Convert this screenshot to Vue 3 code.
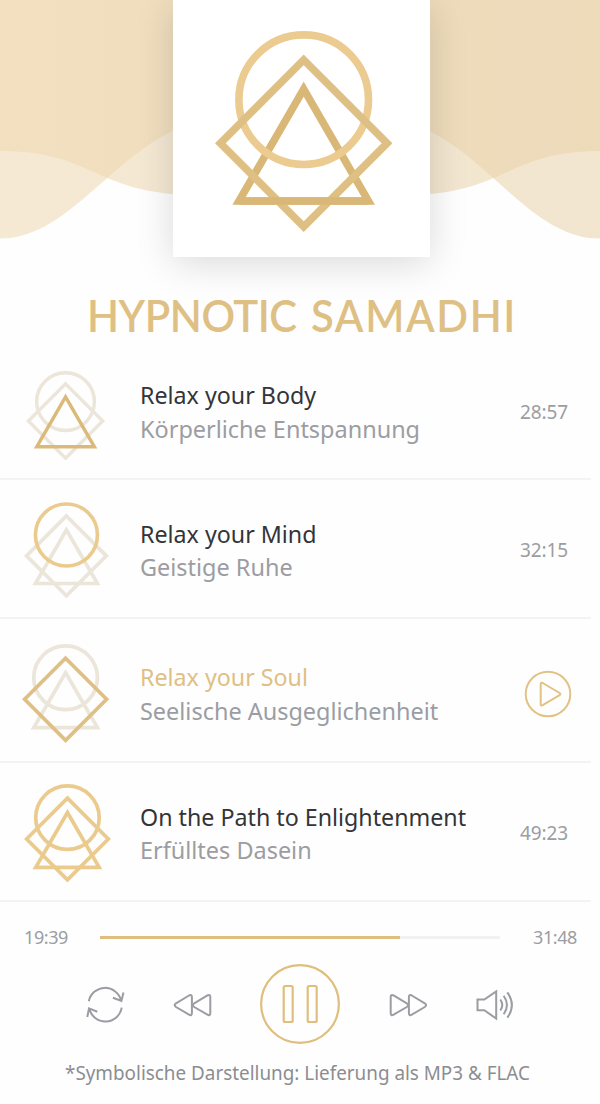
<template>
    <div class="player">
        <header class="hero">
            <svg class="waves" viewBox="0 0 600 240" preserveAspectRatio="none">
                <defs>
                    <linearGradient id="sand" x1="0" y1="0" x2="1" y2="0">
                        <stop offset="0" stop-color="#efd8b1" />
                        <stop offset="1" stop-color="#e8d1a8" />
                    </linearGradient>
                </defs>
                <path class="wave" d="M0 0V151C86 151 94 187 172 194H430C508 187 514 151 600 151V0Z" />
                <path class="wave" d="M0 0V238.500C64 238.500 104 166 172 131H430C496 166 536 238.500 600 238.500V0Z" />
            </svg>
            <div class="cover">
                <svg class="cover-logo" viewBox="215 31 177.600 201.200">
                    <path class="stroke triangle" d="M303.700 89.100L368.400 201H239Z" />
                    <circle class="stroke circle" cx="303.700" cy="99.700" r="64.800" />
                    <path class="stroke diamond" d="M303.700 59.900L387.100 143.300L303.700 226.700L220.300 143.300Z" />
                    <path class="stroke triangle" d="M239 201H368.400" />
                </svg>
            </div>
        </header>

        <h1 class="album">
            <span class="word">HYPNOTIC</span>
            <span class="word wide">SAMADHI</span>
        </h1>

        <ul class="tracks">
            <li v-for="track in tracks" :key="track.title" class="track" :class="[track.symbol, { active: track.playing }]">
                <div class="symbol">
                    <svg viewBox="215 31 177.600 201.200">
                        <circle v-if="track.symbol !== 'mind'" class="stroke circle" cx="303.700" cy="99.700" r="64.800" />
                        <path v-if="track.symbol !== 'soul'" class="stroke diamond" d="M303.700 59.900L387.100 143.300L303.700 226.700L220.300 143.300Z" />
                        <path class="stroke triangle" d="M303.700 89.100L368.400 201H239Z" />
                        <!-- the highlighted shape always goes on top -->
                        <circle v-if="track.symbol === 'mind'" class="stroke circle" cx="303.700" cy="99.700" r="64.800" />
                        <path v-if="track.symbol === 'soul'" class="stroke diamond" d="M303.700 59.900L387.100 143.300L303.700 226.700L220.300 143.300Z" />
                    </svg>
                </div>
                <div class="info">
                    <p class="title"><span>{{ track.title }}</span></p>
                    <p class="subtitle"><span>{{ track.subtitle }}</span></p>
                </div>
                <svg v-if="track.playing" class="play" viewBox="0 0 48 48">
                    <circle cx="24" cy="24" r="22.300" />
                    <path d="M16.700 14.200V34Q16.700 36.300 18.700 35.200L35.600 25.200Q37.400 24.100 35.600 23L18.700 13Q16.700 11.900 16.700 14.200Z" />
                </svg>
                <span v-else class="time">{{ track.time }}</span>
            </li>
        </ul>

        <div class="progress">
            <span class="clock">19:39</span>
            <div class="bar">
                <div class="bar-fill" :style="{ width: progress + '%' }"></div>
            </div>
            <span class="clock right">31:48</span>
        </div>

        <div class="controls">
            <svg class="icon" width="40" height="40" viewBox="0 0 40 40">
                <path d="M3.800 16.300A16.500 16.500 0 0 1 36 15.300M27.900 12.800L36.400 15.900L38.500 7.500" />
                <path d="M36.700 22.700A16.500 16.500 0 0 1 4.300 23.500M2.300 32L4 23.300L12.300 26.700" />
            </svg>
            <svg class="icon rewind" width="40" height="40" viewBox="0 0 40 40">
                <path d="M19.900 12V28Q19.900 31.200 17 29.600L4 22Q1.300 20 4 18.300L17 10.500Q19.900 9 19.900 12Z" />
                <path d="M38.300 12V28Q38.300 31.200 35.400 29.600L22.200 22Q19.500 20 22.200 18.300L35.400 10.500Q38.300 9 38.300 12Z" />
            </svg>
            <svg class="pause" width="80" height="80" viewBox="0 0 80 80">
                <circle cx="40" cy="40" r="38.900" />
                <rect x="23.700" y="22" width="9" height="36" rx="1.500" />
                <rect x="47.700" y="22" width="9" height="36" rx="1.500" />
            </svg>
            <svg class="icon" width="40" height="40" viewBox="0 0 40 40">
                <path d="M2.700 12V28Q2.700 31.200 5.600 29.600L18.800 22Q21.500 20 18.800 18.300L5.600 10.500Q2.700 9 2.700 12Z" />
                <path d="M20.900 12V28Q20.900 31.200 23.800 29.600L36.800 22Q39.500 20 36.800 18.300L23.800 10.500Q20.900 9 20.900 12Z" />
            </svg>
            <svg class="icon" width="40" height="40" viewBox="0 0 40 40">
                <path d="M2.500 14.500H9.300L21.200 6.400V33.600L9.300 25.300H2.500Z" />
                <path d="M25.300 14.500Q29.300 20 25.300 25.500M28.700 10.700Q35.200 20 28.700 29.300M32.300 7.300Q41.500 20 32.300 32.700" />
            </svg>
        </div>

        <p class="note"><span>*Symbolische Darstellung: Lieferung als MP3 &amp; FLAC</span></p>
    </div>
</template>

<script setup>
import { ref } from 'vue';

const tracks = ref([
    { title: 'Relax your Body', subtitle: 'Körperliche Entspannung', time: '28:57', symbol: 'body' },
    { title: 'Relax your Mind', subtitle: 'Geistige Ruhe', time: '32:15', symbol: 'mind' },
    { title: 'Relax your Soul', subtitle: 'Seelische Ausgeglichenheit', symbol: 'soul', playing: true },
    { title: 'On the Path to Enlightenment', subtitle: 'Erfülltes Dasein', time: '49:23', symbol: 'path' },
]);

const progress = ref(75);
</script>

<style>
body {
    margin: 0;
    background: #fefefe;
}
</style>

<style scoped>
.player {
    width: 600px;
    height: 1104px;
    overflow: hidden;
    background: #fefefe;
    font-family: "Noto Sans", sans-serif;
    color: #9b9da2;
}

/* Header with waves and cover */
.hero {
    display: grid;
    height: 288px;
}

.waves,
.cover {
    grid-area: 1 / 1;
}

.waves {
    width: 600px;
    height: 240px;
}

.wave {
    fill: url(#sand);
    fill-opacity: 0.55;
}

.cover {
    display: flex;
    justify-content: center;
    width: 257px;
    height: 257px;
    margin-left: 172.500px;
    background: #fff;
    box-shadow: 0 6px 36px rgba(0, 0, 0, 0.15);
    z-index: 1;
}

.cover-logo {
    width: 177.600px;
    height: 201.200px;
    margin: 31px 0 0 5px;
}

.stroke {
    fill: none;
    stroke-width: 7.600;
}

.circle {
    stroke: #ebcb90;
}

.diamond {
    stroke: #dfc084;
}

.triangle {
    stroke: #d9b777;
}

.album {
    display: flex;
    height: 55px;
    margin: 0;
    padding-left: 86.500px;
    font-family: Lato, sans-serif;
    font-size: 44px;
    font-weight: 600;
    line-height: 54px;
    color: #dfc084;
    white-space: nowrap;
}

.word {
    width: 224px;
    letter-spacing: -0.500px;
    transform-origin: left;
    transform: scaleX(0.95);
}

.word.wide {
    letter-spacing: 1.700px;
}

.title span,
.subtitle span,
.note span {
    display: inline-block;
    transform-origin: left;
    transform: scaleX(0.956);
}

.subtitle span {
    transform: scaleX(0.965);
}

.note span {
    transform: scaleX(0.93);
}

/* Track list */
.tracks {
    margin: 0;
    padding: 0;
    list-style: none;
}

.track {
    display: flex;
    align-items: center;
    box-sizing: border-box;
    width: 591px;
    height: 139px;
    padding-top: 3px;
    border-bottom: 2px solid #f3f3f3;
}

.track.body {
    height: 137px;
    padding-top: 2px;
}

.track.soul {
    height: 144px;
    padding-top: 7px;
}

.symbol {
    display: flex;
    justify-content: center;
    width: 132px;
    flex: none;
}

.symbol svg {
    width: 85px;
    height: 96.500px;
}

.body .symbol svg {
    width: 79.200px;
    height: 89.700px;
    margin-top: 8px;
}

.path .symbol svg {
    width: 87px;
    height: 98.600px;
    margin-left: 3px;
}

.soul .symbol svg {
    width: 87.300px;
    height: 99px;
}

.symbol .stroke {
    stroke: #ebe5da;
}

.path .symbol .stroke,
.mind .symbol .circle {
    stroke: #ebcb8d;
}

.body .symbol .triangle {
    stroke: #dbb978;
}

.soul .symbol .diamond {
    stroke: #e0c082;
}

.info {
    flex: 1;
    padding-left: 7.500px;
}

.title,
.subtitle {
    margin: 0;
    font-size: 24.300px;
    line-height: 33.500px;
    white-space: nowrap;
}

.title {
    color: #333438;
}

.active .title {
    color: #dfc084;
}

.time {
    width: 71px;
    font-size: 19px;
    letter-spacing: -0.100px;
}

.play {
    width: 48px;
    height: 48px;
    margin-right: 19px;
    fill: none;
    stroke: #e2c285;
    stroke-width: 2;
}

/* Progress */
.progress {
    display: flex;
    align-items: center;
    height: 70px;
}

.clock {
    flex: none;
    box-sizing: border-box;
    width: 100px;
    padding-left: 24px;
    font-size: 18px;
    letter-spacing: -0.400px;
}

.clock.right {
    padding-left: 33px;
}

.bar {
    width: 400px;
    height: 3px;
    background: #f1f1f1;
}

.bar-fill {
    height: 3px;
    background: #dfbf80;
}

/* Controls */
.controls {
    display: flex;
    align-items: center;
    justify-content: space-between;
    height: 80px;
    margin: -8px 85px 0;
}

.icon {
    margin-top: 1px;
    fill: none;
    stroke: #9b9da2;
    stroke-width: 2;
}

.rewind {
    margin-right: 1px;
    margin-left: -1px;
}

.pause {
    fill: none;
    stroke: #e0be7e;
    stroke-width: 2.200;
}

.note {
    margin: 13px 0 0;
    padding-left: 65px;
    font-size: 20.300px;
    line-height: 30px;
    color: #8c8d91;
    white-space: nowrap;
}
</style>
